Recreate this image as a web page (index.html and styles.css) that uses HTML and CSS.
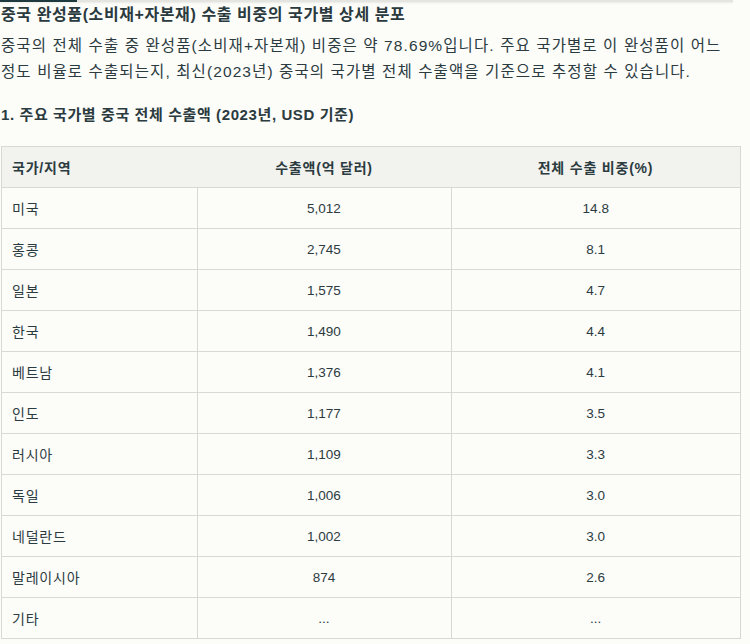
FILE: index.html
```html
<!DOCTYPE html>
<html lang="ko">
<head>
<meta charset="utf-8">
<link rel="stylesheet" href="styles.css">
</head>
<body>
<div class="topline"><span class="topline-dark"></span></div>
<main class="content">
  <h2 class="title">중국 완성품(소비재+자본재) 수출 비중의 국가별 상세 분포</h2>
  <p class="intro">중국의 전체 수출 중 완성품(소비재+자본재) 비중은 약 78.69%입니다. 주요 국가별로 이 완성품이 어느 정도 비율로 수출되는지, 최신(2023년) 중국의 국가별 전체 수출액을 기준으로 추정할 수 있습니다.</p>
  <h3 class="subtitle">1. 주요 국가별 중국 전체 수출액 (2023년, USD 기준)</h3>
  <table class="data">
    <thead>
      <tr><th class="left">국가/지역</th><th>수출액(억 달러)</th><th>전체 수출 비중(%)</th></tr>
    </thead>
    <tbody>
      <tr><td class="left">미국</td><td>5,012</td><td>14.8</td></tr>
      <tr><td class="left">홍콩</td><td>2,745</td><td>8.1</td></tr>
      <tr><td class="left">일본</td><td>1,575</td><td>4.7</td></tr>
      <tr><td class="left">한국</td><td>1,490</td><td>4.4</td></tr>
      <tr><td class="left">베트남</td><td>1,376</td><td>4.1</td></tr>
      <tr><td class="left">인도</td><td>1,177</td><td>3.5</td></tr>
      <tr><td class="left">러시아</td><td>1,109</td><td>3.3</td></tr>
      <tr><td class="left">독일</td><td>1,006</td><td>3.0</td></tr>
      <tr><td class="left">네덜란드</td><td>1,002</td><td>3.0</td></tr>
      <tr><td class="left">말레이시아</td><td>874</td><td>2.6</td></tr>
      <tr><td class="left">기타</td><td>...</td><td>...</td></tr>
    </tbody>
  </table>
</main>
</body>
</html>
```
FILE: styles.css
```css
html, body {
  margin: 0;
  padding: 0;
  background: #fcfcf9;
}
body {
  font-family: "Liberation Sans", "Noto Sans CJK KR", sans-serif;
  color: #2b3b3f;
  word-break: keep-all;
}
.topline {
  position: fixed;
  top: 0;
  left: 0;
  width: 733px;
  height: 2px;
  background: #e4e4e0;
  box-shadow: 0 1px 2px rgba(0,0,0,0.08);
}
.topline-dark {
  display: block;
  width: 77px;
  height: 2px;
  background: #1f3a3f;
}
.content {
  padding: 2px 9px 0 1px;
}
.title {
  margin: 0;
  font-size: 16px;
  letter-spacing: 0.6px;
  line-height: 26px;
  font-weight: 700;
  color: #2a3a3e;
}
.intro {
  margin: 5px 0 0;
  font-size: 15.5px;
  letter-spacing: 1.1px;
  line-height: 26px;
}
.subtitle {
  margin: 18px 0 0;
  font-size: 15px;
  letter-spacing: 0.6px;
  line-height: 24px;
  font-weight: 700;
}
.data {
  margin-top: 19px;
  width: 740px;
  border-collapse: collapse;
  font-size: 13.5px;
  table-layout: fixed;
}
.data th, .data td {
  height: 40px;
  padding: 0 10px;
  text-align: center;
  border: 1px solid #d9d9d4;
}
.data th {
  background: #f2f2ee;
  font-weight: 700;
  font-size: 14px;
  letter-spacing: 0.8px;
  border-left: none;
  border-right: none;
}
.data th:first-child { border-left: 1px solid #d9d9d4; }
.data th:last-child { border-right: 1px solid #d9d9d4; }
.data th:nth-child(1), .data td:nth-child(1) { width: 175px; }
.data th:nth-child(2), .data td:nth-child(2) { width: 234px; }
.data .left { text-align: left; }
.data td { font-weight: 400; }
.data td.left {
  font-size: 14px;
  letter-spacing: 0.8px;
}
```
